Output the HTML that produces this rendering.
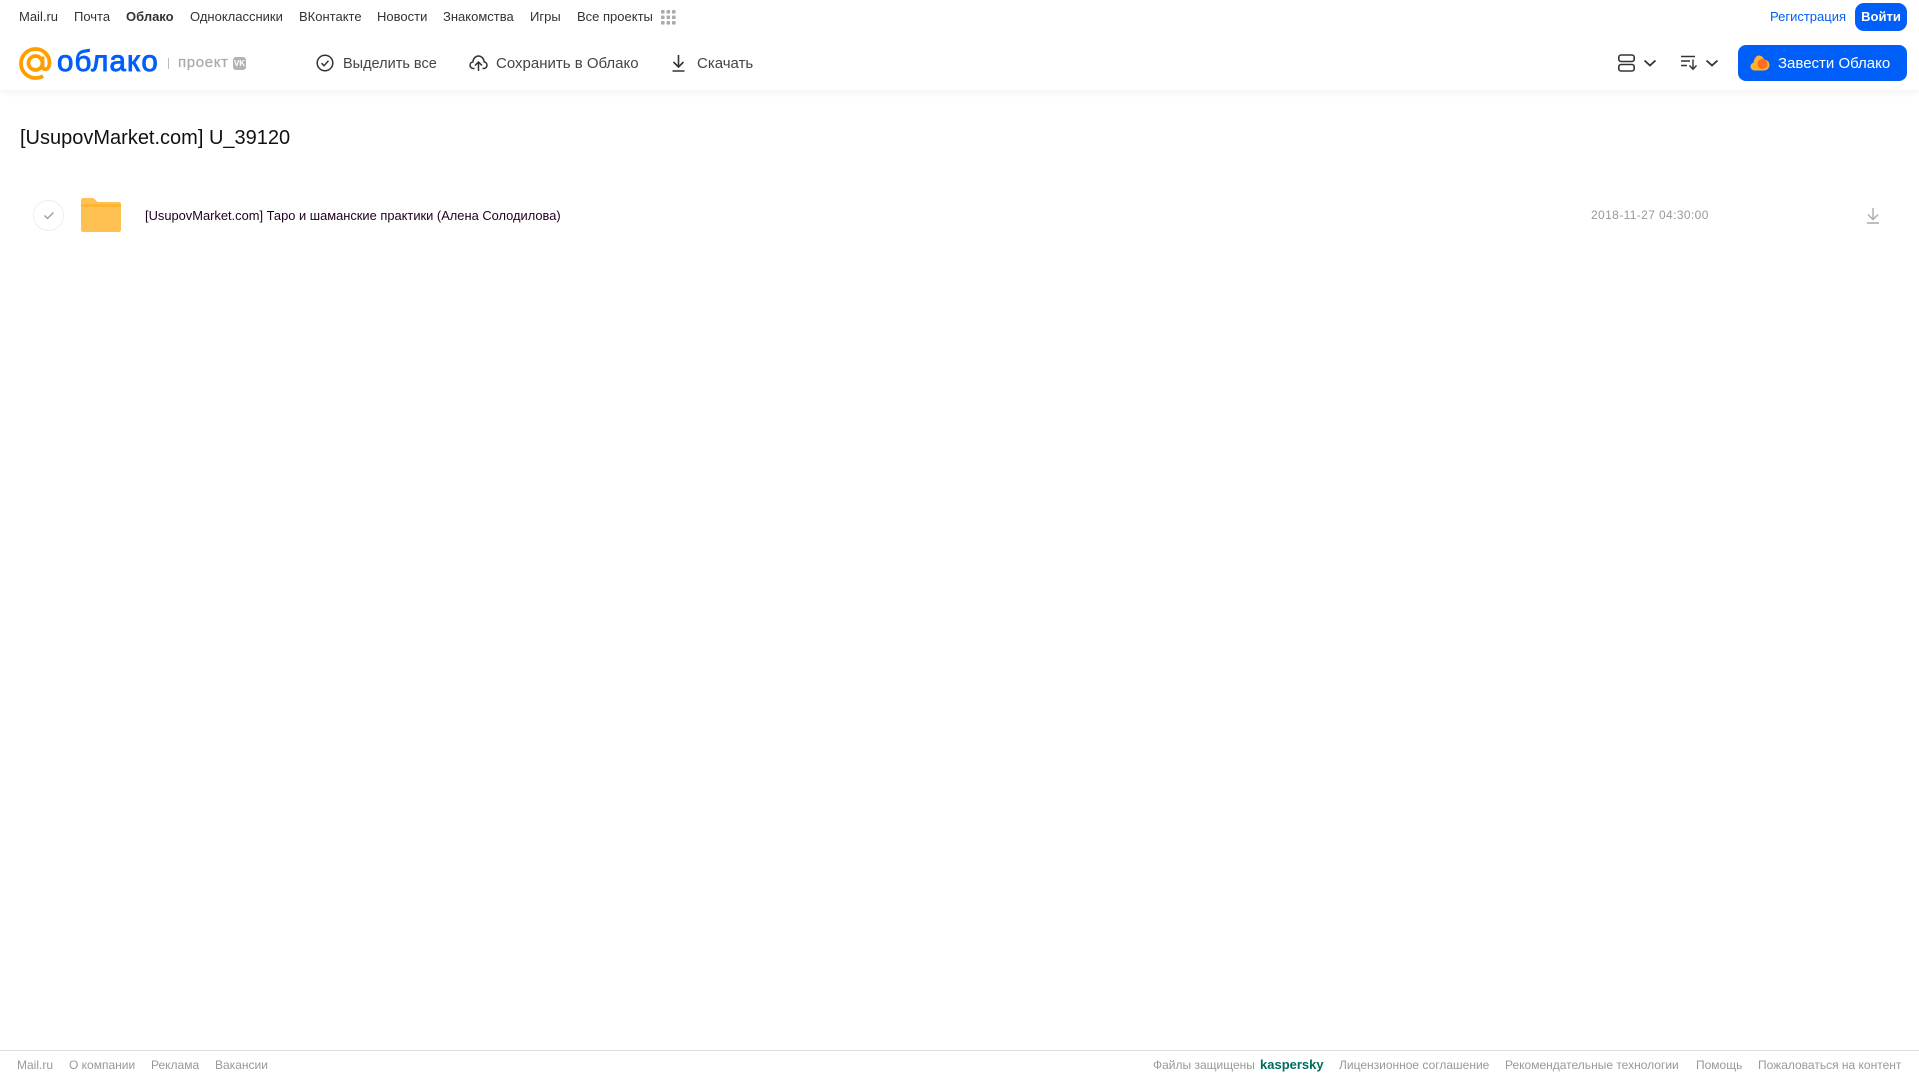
<!DOCTYPE html>
<html lang="ru"><head><meta charset="utf-8"><title>Облако</title>
<style>
html,body{margin:0;padding:0;background:#fff;width:1919px;height:1079px;overflow:hidden;font-family:"Liberation Sans",sans-serif}
.t{position:absolute;white-space:nowrap;line-height:20px;height:20px}
.n{top:7px;font-size:13px;color:#333}
.b{top:54px;font-size:15px;color:#444}
.f{top:1055px;font-size:12px;color:#999}
svg{position:absolute;overflow:visible}
</style></head><body>
<div style="position:absolute;left:0;top:0;width:1919px;height:90px;background:#fff;box-shadow:0 2px 8px rgba(0,0,0,.06)"></div>

<span class="t n" style="left:19px">Mail.ru</span>
<span class="t n" style="left:74px">Почта</span>
<span class="t n" style="left:126px;font-weight:700">Облако</span>
<span class="t n" style="left:190px">Одноклассники</span>
<span class="t n" style="left:299px">ВКонтакте</span>
<span class="t n" style="left:377px">Новости</span>
<span class="t n" style="left:443px">Знакомства</span>
<span class="t n" style="left:530px">Игры</span>
<span class="t n" style="left:577px">Все проекты</span>
<svg style="left:661px;top:10px" width="15" height="15" fill="#aaa"><rect x="0" y="0" width="3.6" height="3.6" rx="1"/><rect x="5.5" y="0" width="3.6" height="3.6" rx="1"/><rect x="11" y="0" width="3.6" height="3.6" rx="1"/><rect x="0" y="5.5" width="3.6" height="3.6" rx="1"/><rect x="5.5" y="5.5" width="3.6" height="3.6" rx="1"/><rect x="11" y="5.5" width="3.6" height="3.6" rx="1"/><rect x="0" y="11" width="3.6" height="3.6" rx="1"/><rect x="5.5" y="11" width="3.6" height="3.6" rx="1"/><rect x="11" y="11" width="3.6" height="3.6" rx="1"/></svg>

<span class="t n" style="left:1770px;color:#005ff9">Регистрация</span>
<div style="position:absolute;left:1855px;top:3px;width:52px;height:28px;background:#005ff9;border-radius:9px;color:#fff;font-size:13px;font-weight:700;line-height:28px;text-align:center">Войти</div>

<svg style="left:19px;top:47px" width="33" height="33" viewBox="0 0 33 33" fill="none" stroke="#ff9e00" stroke-width="3.8"><circle cx="16.5" cy="16" r="7"/><path d="M23.5 9.5v9.500c0 5 7 4.500 7-3C30.500 8 24 2 16.500 2 8.500 2 2 8.500 2 16.500S8.500 31 16.500 31c3 0 5.500-.7 7.500-2"/></svg>
<span class="t" style="left:57px;top:43px;height:38px;line-height:38px;font-size:29.500px;color:#005ff9;-webkit-text-stroke:.9px #005ff9;letter-spacing:1.100px">облако</span>
<div style="position:absolute;left:168px;top:58px;width:1px;height:11px;background:#bbb"></div>
<span class="t" style="left:178px;top:53px;font-size:15px;color:#aaa;letter-spacing:.65px;-webkit-text-stroke:.25px #aaa">проект</span>
<div style="position:absolute;left:233px;top:57px;width:13px;height:13px;background:#b3b3b3;border-radius:3px;color:#fff;font-size:8px;font-weight:700;line-height:13px;text-align:center">VK</div>

<svg style="left:316px;top:54px" width="18" height="18" viewBox="0 0 18 18" fill="none" stroke="#333" stroke-width="1.500"><circle cx="9" cy="9" r="7.800"/><path d="M5.500 9.200l2.500 2.500 4.500-5"/></svg>
<span class="t b" style="left:343px;font-size:14.500px">Выделить все</span>
<svg style="left:469px;top:54px" width="19" height="18" viewBox="0 0 19 18" fill="none" stroke="#333" stroke-width="1.500"><path d="M5.500 14.500H4.500C2.500 14.500 1 13 1 11.200c0-1.700 1.200-3 2.800-3.200C4.200 4.500 6.500 2 9.500 2s5.300 2.500 5.700 6c1.600.2 2.800 1.500 2.800 3.200 0 1.800-1.500 3.300-3.500 3.300h-1"/><path d="M9.500 17V8.500M6 11.500l3.500-3.500 3.500 3.500"/></svg>
<span class="t b" style="left:496px">Сохранить в Облако</span>
<svg style="left:671px;top:54px" width="15" height="18" viewBox="0 0 15 18" fill="none" stroke="#333" stroke-width="1.600"><path d="M7.500 1v11.500M2.500 8l5 5 5-5M1.500 17h12"/></svg>
<span class="t b" style="left:697px">Скачать</span>

<svg style="left:1618px;top:54px" width="17" height="18" viewBox="0 0 17 18" fill="none" stroke="#333" stroke-width="1.600"><rect x=".8" y="1" width="15.400" height="6.500" rx="2.200"/><rect x=".8" y="10.500" width="15.400" height="6.500" rx="2.200"/></svg>
<svg style="left:1643px;top:59px" width="14" height="8" viewBox="0 0 14 8" fill="none" stroke="#333" stroke-width="1.800"><path d="M1.500 1.500l5.500 5 5.500-5"/></svg>
<svg style="left:1681px;top:55px" width="17" height="16" viewBox="0 0 17 16" fill="none" stroke="#333" stroke-width="1.400"><path d="M0 1.500h14M0 6h9M0 10.500h6M12 4.500V14M8.500 10.500l3.500 3.700 3.500-3.700"/></svg>
<svg style="left:1705px;top:59px" width="14" height="8" viewBox="0 0 14 8" fill="none" stroke="#333" stroke-width="1.800"><path d="M1.500 1.500l5.500 5 5.500-5"/></svg>

<div style="position:absolute;left:1738px;top:45px;width:169px;height:36px;background:#005ff9;border-radius:8px"></div>
<svg style="left:1750px;top:54px" width="20" height="18" viewBox="0 0 20 18"><path d="M4.500 16.500C2 16.500 .5 14.500 .5 12.500c0-2 1.300-3.500 3-3.800C4 5 6 1.500 9 1.500c2.500 0 4.500 2 5 4 3 0 5.500 2.500 5.500 5.500s-2.500 5.500-5.500 5.500z" fill="#ffb02e"/><circle cx="12.500" cy="10" r="5" fill="#ff6d21"/></svg>
<span class="t b" style="left:1778px;color:#fff">Завести Облако</span>

<span class="t" style="left:20px;top:125px;height:26px;line-height:26px;font-size:20px;color:#111">[UsupovMarket.com] U_39120</span>

<div style="position:absolute;left:33px;top:200px;width:29px;height:29px;border:1px solid #eee;border-radius:50%"></div>
<svg style="left:43px;top:211px" width="12" height="9" viewBox="0 0 12 9" fill="none" stroke="#999" stroke-width="1.300"><path d="M1.500 4.500l3 3 6-6"/></svg>
<svg style="left:81px;top:198px" width="40" height="34" viewBox="0 0 40 34"><path d="M2 0h9c2 0 3 1 4 2.500S17 4 19 4h19c1 0 2 1 2 2v26c0 1-1 2-2 2H2c-1 0-2-1-2-2V2C0 1 1 0 2 0z" fill="#ffc252"/><path d="M0 6h40v3H0z" fill="#ffb433"/></svg>
<span class="t" style="left:145px;top:206px;font-size:12.880px;color:#200020">[UsupovMarket.com] Таро и шаманские практики (Алена Солодилова)</span>
<span class="t" style="left:1591px;top:205px;font-size:12px;color:#999;letter-spacing:.38px">2018-11-27 04:30:00</span>
<svg style="left:1866px;top:207px" width="14" height="17" viewBox="0 0 14 17" fill="none" stroke="#aaa" stroke-width="1.400"><path d="M7 1v11M2 7.500l5 5 5-5M1 16h12"/></svg>

<div style="position:absolute;left:0;top:1050px;width:1919px;height:1px;background:#ddd"></div>
<span class="t f" style="left:17px">Mail.ru</span>
<span class="t f" style="left:69px">О компании</span>
<span class="t f" style="left:151px">Реклама</span>
<span class="t f" style="left:215px">Вакансии</span>
<span class="t f" style="left:1153px">Файлы защищены</span>
<span class="t f" style="left:1260px;font-size:13px;font-weight:700;color:#006d5c">kaspersky</span>
<span class="t f" style="left:1339px">Лицензионное соглашение</span>
<span class="t f" style="left:1505px">Рекомендательные технологии</span>
<span class="t f" style="left:1696px">Помощь</span>
<span class="t f" style="left:1758px">Пожаловаться на контент</span>
</body></html>
